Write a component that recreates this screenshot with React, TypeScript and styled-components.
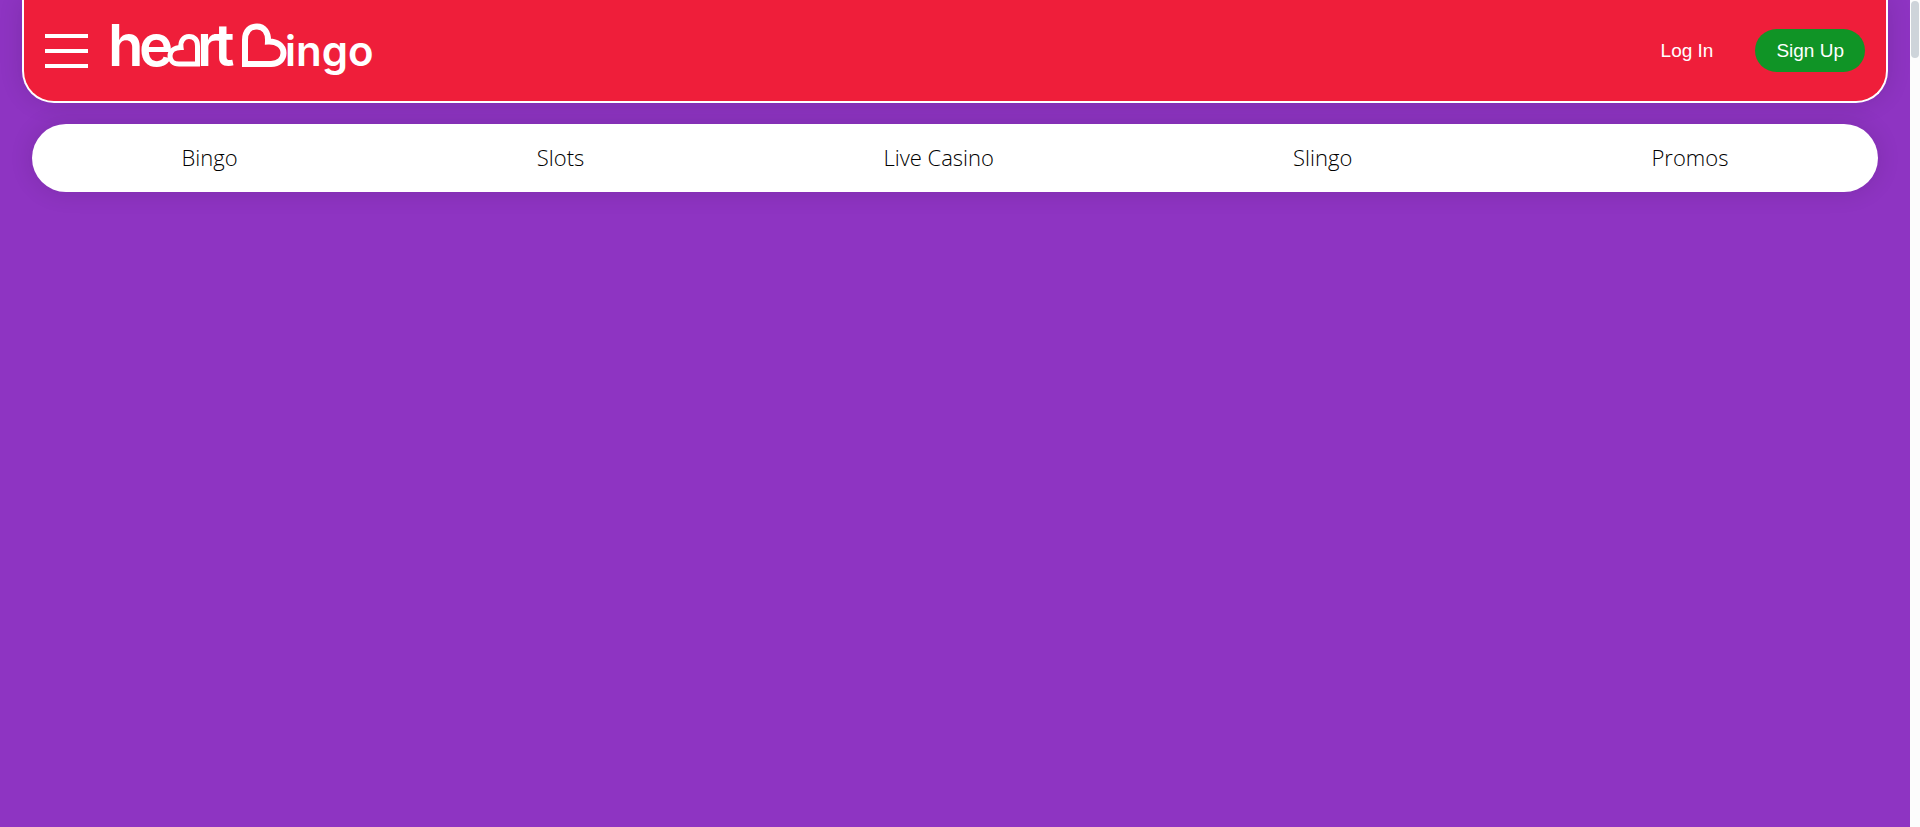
import React from "react";
import styled, { createGlobalStyle } from "styled-components";

const GlobalStyle = createGlobalStyle`
  *, *::before, *::after { box-sizing: border-box; }
  body { margin: 0; background: #8e34c2; }
`;

const Shell = styled.div`
  display: flex;
  min-height: 100vh;
`;

const Page = styled.div`
  flex: 1;
  min-width: 0;
  padding: 0 22px;
  background: #8e34c2;
  overflow: hidden;
`;

const Header = styled.header`
  display: flex;
  align-items: center;
  height: 103px;
  padding: 0 21px;
  background: #ef1e3a;
  border: 2px solid #fff;
  border-top: 0;
  border-radius: 0 0 32px 32px;
  box-shadow: 0 0 24px rgba(0, 0, 0, 0.12);
`;

const MenuButton = styled.button`
  display: flex;
  flex-direction: column;
  gap: 11px;
  width: 43px;
  padding: 0;
  border: 0;
  background: none;
  cursor: pointer;
`;

const MenuBar = styled.span`
  height: 4px;
  background: #fff;
`;

const LogoLink = styled.a`
  display: block;
  margin-left: 20px;
  line-height: 0;
`;

const LogoText = styled.text<{ $size: number }>`
  font-family: Inter, "Liberation Sans", sans-serif;
  font-size: ${({ $size }) => $size}px;
  font-weight: 600;
  fill: #fff;
`;

const Account = styled.div`
  display: flex;
  align-items: center;
  gap: 21px;
  margin-left: auto;
`;

const AccountButton = styled.button<{ $primary?: boolean }>`
  height: 43px;
  padding: 0 21px;
  border: 0;
  border-radius: 22px;
  background: ${({ $primary }) => ($primary ? "#109426" : "transparent")};
  color: #fff;
  font: 400 19px "Liberation Sans", Arial, sans-serif;
  white-space: nowrap;
  cursor: pointer;
`;

const Nav = styled.nav`
  display: flex;
  align-items: center;
  justify-content: space-around;
  height: 68px;
  margin: 21px 10px 0;
  padding-bottom: 2px;
  background: #fff;
  border-radius: 34px;
  box-shadow: 0 0 24px rgba(0, 0, 0, 0.12);
`;

const NavLink = styled.a`
  color: #000;
  font: 300 22px/30px "Open Sans", sans-serif;
  text-decoration: none;
`;

const ScrollTrack = styled.div`
  width: 10px;
  padding: 1px;
  background: #fcfcfc;
`;

const ScrollThumb = styled.div`
  height: 57px;
  border-radius: 4px;
  background: #ced4da;
`;

const links = ["Bingo", "Slots", "Live Casino", "Slingo", "Promos"];

function Logo() {
  return (
    <svg width="280" height="84" viewBox="108 9 280 84" role="img" aria-label="heart Bingo">
      <LogoText $size={58} x="108" y="66">h</LogoText>
      <LogoText $size={58} x="139" y="66">e</LogoText>
      <path
        d="M197.500 64H179C173 64 170 60 170 56C170 51 174 47.500 181 47.500C180 41 184 36.500 189 36.500C194.500 36.500 197.500 40 197.500 46Z"
        fill="#ef1e3a"
        stroke="#fff"
        strokeWidth="5"
      />
      <LogoText $size={58} x="197" y="66">r</LogoText>
      <LogoText $size={58} x="214" y="66">t</LogoText>
      <path
        d="M245 64V40C245 31 250 26.500 257 26.500C264 26.500 268.500 32 268 41.500C277 41 283.500 46 283.500 53C283.500 59 279 64 271 64Z"
        fill="none"
        stroke="#fff"
        strokeWidth="6"
      />
      <LogoText $size={42} x="285" y="66">ingo</LogoText>
    </svg>
  );
}

export default function App() {
  return (
    <>
      <GlobalStyle />
      <Shell>
        <Page>
          <Header>
            <MenuButton type="button" aria-label="Open menu">
              <MenuBar />
              <MenuBar />
              <MenuBar />
            </MenuButton>
            <LogoLink href="#home">
              <Logo />
            </LogoLink>
            <Account>
              <AccountButton type="button">Log In</AccountButton>
              <AccountButton type="button" $primary>
                Sign Up
              </AccountButton>
            </Account>
          </Header>
          <Nav aria-label="Games">
            {links.map((label) => (
              <NavLink key={label} href={`#${label.toLowerCase().replace(" ", "-")}`}>
                {label}
              </NavLink>
            ))}
          </Nav>
        </Page>
        <ScrollTrack aria-hidden="true">
          <ScrollThumb />
        </ScrollTrack>
      </Shell>
    </>
  );
}
